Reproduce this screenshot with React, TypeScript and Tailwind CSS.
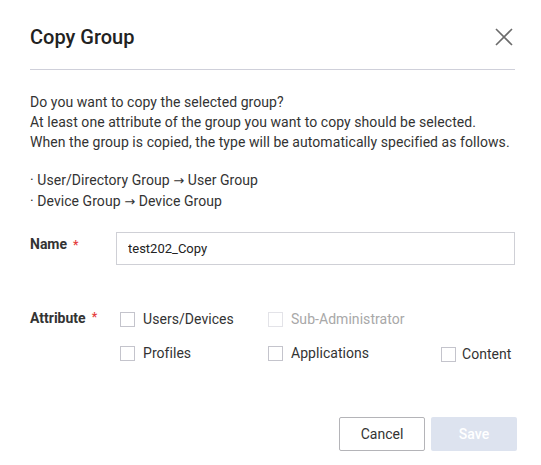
import React, { useState } from 'react';

const Check: React.FC<{ label: string; disabled?: boolean; className?: string }> = ({ label, disabled, className }) => {
  const [on, setOn] = useState(false);
  return (
    <label className={`flex items-center gap-2 ${className ?? ''}`}>
      <span
        onClick={() => !disabled && setOn(!on)}
        className={`w-[15px] h-[15px] border bg-white ${disabled ? 'border-[#e3e3e8]' : 'border-[#c4c4cc]'} ${on ? 'bg-[#3b6fd8]' : ''}`}
      />
      <span className={`text-[14px] tracking-[0.05px] ${disabled ? 'text-[#a8a8a8]' : 'text-[#333333]'}`}>{label}</span>
    </label>
  );
};

const Arrow = () => <span className="text-[13px]" style={{ fontFamily: '"DejaVu Sans", sans-serif' }}>→</span>;

export default function App() {
  const [name, setName] = useState('test202_Copy');

  return (
    <div className="w-[541px] h-[465px] bg-white pl-[30px] pr-[26px] text-[#333333]" style={{ fontFamily: 'Roboto, "Liberation Sans", sans-serif' }}>
      {/* Header */}
      <div className="flex items-center justify-between h-[70px] pt-[4px] border-b border-[#cfd0da]">
        <h2 className="text-[20px] font-medium text-[#222222]">Copy Group</h2>
        <button className="mr-[1px] text-[#6b6b6b]">
          <svg width="20" height="20" viewBox="0 0 20 20" fill="none" stroke="currentColor" strokeWidth="1.6">
            <path d="M2 2 L18 18 M18 2 L2 18" />
          </svg>
        </button>
      </div>

      {/* Description */}
      <div className="pt-[22px] text-[14px] leading-[20px] tracking-[0.06px] text-[#333333]">
        <p>Do you want to copy the selected group?</p>
        <p>At least one attribute of the group you want to copy should be selected.</p>
        <p>When the group is copied, the type will be automatically specified as follows.</p>
        <p className="mt-[18px]">· User/Directory Group <Arrow /> User Group</p>
        <p>· Device Group <Arrow /> Device Group</p>
      </div>

      {/* Name */}
      <div className="flex items-center mt-[20px]">
        <div className="w-[86px] flex items-center text-[14px] font-bold text-[#333333] -mt-[8px]">
          Name <span className="ml-[6px] text-[#e53e3e] text-[12px]">*</span>
        </div>
        <input
          value={name}
          onChange={(e) => setName(e.target.value)}
          className="flex-1 h-[33px] border border-[#cfd0d6] px-[11px] text-[13px] text-[#222222] outline-none"
        />
      </div>

      {/* Attribute */}
      <div className="flex mt-[44px]">
        <div className="w-[86px] flex items-start text-[14px] font-bold text-[#333333] -mt-[1px]">
          Attribute <span className="ml-[6px] text-[#e53e3e] text-[12px]">*</span>
        </div>
        <div className="pl-[4px] flex flex-col gap-[12px]">
          <div className="flex">
            <Check label="Users/Devices" className="w-[148px]" />
            <Check label="Sub-Administrator" disabled />
          </div>
          <div className="flex">
            <Check label="Profiles" className="w-[148px]" />
            <Check label="Applications" className="w-[173px]" />
            <Check label="Content" className="mt-[2px] gap-[6px]" />
          </div>
        </div>
      </div>

      {/* Footer */}
      <div className="flex justify-end gap-[6px] mt-[52px] -mr-[2px]">
        <button className="w-[86px] h-[34px] border border-[#b4b4b8] rounded-[2px] bg-white text-[14px] text-[#333333]">Cancel</button>
        <button disabled className="w-[86px] h-[34px] rounded-[2px] bg-[#dde3ef] text-[14px] font-medium text-white">Save</button>
      </div>
    </div>
  );
}
